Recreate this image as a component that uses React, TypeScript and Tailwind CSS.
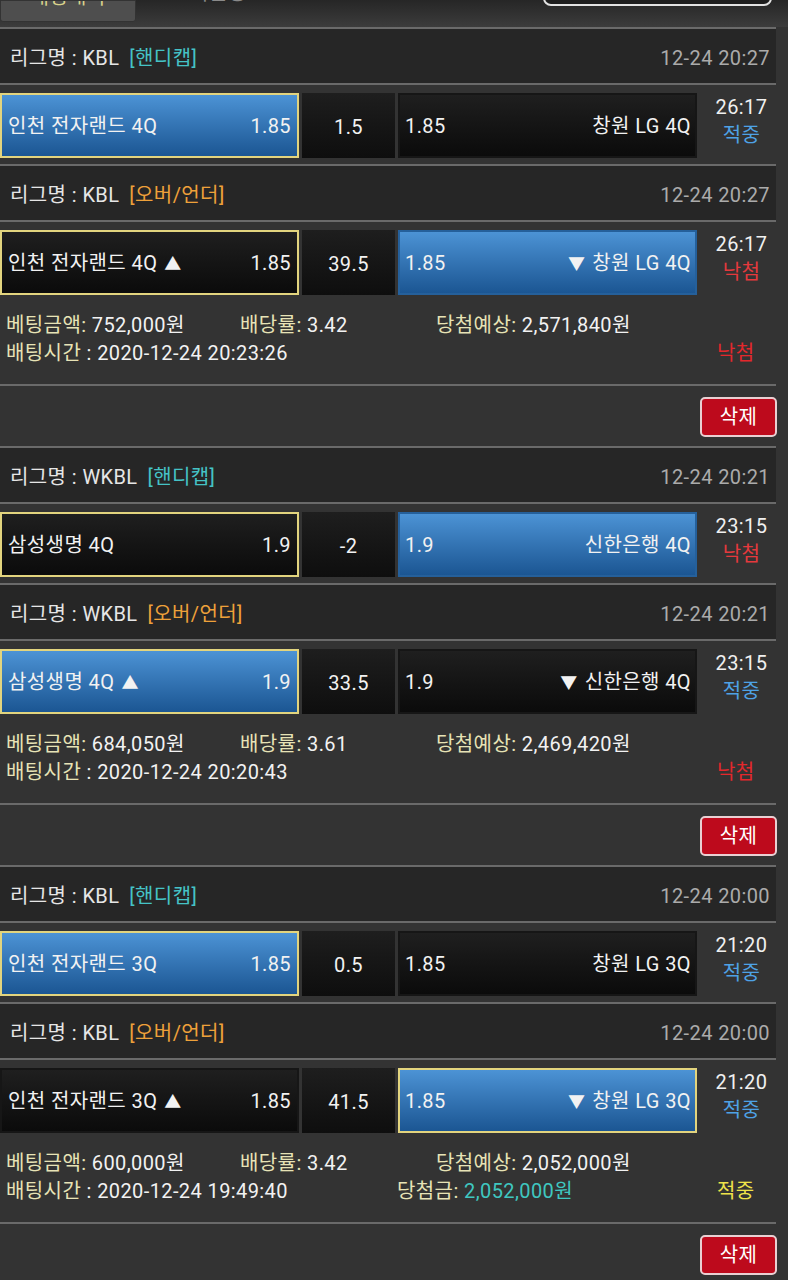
import React from 'react';

type Side = { name: string; odds: string; blue?: boolean; pick?: boolean; arrow?: 'up' | 'down' };

type Match = {
  league: string;
  kind: 'handi' | 'ou';
  date: string;
  home: Side;
  line: string;
  away: Side;
  time: string;
  result: 'hit' | 'miss';
};

type Bet = {
  matches: [Match, Match];
  amount: string;
  rate: string;
  expect: string;
  betTime: string;
  won?: string;
  status: 'hit' | 'miss';
};

const bets: Bet[] = [
  {
    matches: [
      {
        league: 'KBL', kind: 'handi', date: '12-24 20:27',
        home: { name: '인천 전자랜드 4Q', odds: '1.85', blue: true, pick: true },
        line: '1.5',
        away: { name: '창원 LG 4Q', odds: '1.85' },
        time: '26:17', result: 'hit',
      },
      {
        league: 'KBL', kind: 'ou', date: '12-24 20:27',
        home: { name: '인천 전자랜드 4Q', odds: '1.85', pick: true, arrow: 'up' },
        line: '39.5',
        away: { name: '창원 LG 4Q', odds: '1.85', blue: true, arrow: 'down' },
        time: '26:17', result: 'miss',
      },
    ],
    amount: '752,000원', rate: '3.42', expect: '2,571,840원',
    betTime: '2020-12-24 20:23:26', status: 'miss',
  },
  {
    matches: [
      {
        league: 'WKBL', kind: 'handi', date: '12-24 20:21',
        home: { name: '삼성생명 4Q', odds: '1.9', pick: true },
        line: '-2',
        away: { name: '신한은행 4Q', odds: '1.9', blue: true },
        time: '23:15', result: 'miss',
      },
      {
        league: 'WKBL', kind: 'ou', date: '12-24 20:21',
        home: { name: '삼성생명 4Q', odds: '1.9', blue: true, pick: true, arrow: 'up' },
        line: '33.5',
        away: { name: '신한은행 4Q', odds: '1.9', arrow: 'down' },
        time: '23:15', result: 'hit',
      },
    ],
    amount: '684,050원', rate: '3.61', expect: '2,469,420원',
    betTime: '2020-12-24 20:20:43', status: 'miss',
  },
  {
    matches: [
      {
        league: 'KBL', kind: 'handi', date: '12-24 20:00',
        home: { name: '인천 전자랜드 3Q', odds: '1.85', blue: true, pick: true },
        line: '0.5',
        away: { name: '창원 LG 3Q', odds: '1.85' },
        time: '21:20', result: 'hit',
      },
      {
        league: 'KBL', kind: 'ou', date: '12-24 20:00',
        home: { name: '인천 전자랜드 3Q', odds: '1.85', arrow: 'up' },
        line: '41.5',
        away: { name: '창원 LG 3Q', odds: '1.85', blue: true, pick: true, arrow: 'down' },
        time: '21:20', result: 'hit',
      },
    ],
    amount: '600,000원', rate: '3.42', expect: '2,052,000원',
    betTime: '2020-12-24 19:49:40', won: '2,052,000원', status: 'hit',
  },
];

const Line = () => <div className="h-[2px] w-[776px] bg-[#6a6a6a]" />;

const LeagueHeader = ({ m }: { m: Match }) => (
  <div className="flex h-[54px] w-[776px] items-center justify-between bg-[#262626] pl-[10px] pr-[6px] pt-[4px]">
    <div className="flex items-center">
      <span className="text-[#e6e6e6]">리그명 : {m.league}</span>
      {m.kind === 'handi' ? (
        <span className="ml-[10px] text-[#45c3c6]">[핸디캡]</span>
      ) : (
        <span className="ml-[10px] text-[#eea13a]">[오버/언더]</span>
      )}
    </div>
    <span className="text-[#ababab]">{m.date}</span>
  </div>
);

const Cell = ({ s, away }: { s: Side; away?: boolean }) => {
  const bg = s.blue
    ? 'bg-linear-to-b from-[#4c93d5] to-[#1b5693]'
    : 'bg-linear-to-b from-[#1f1f1f] to-[#0b0b0b]';
  const border = s.pick ? 'border-[#e2d47e]' : s.blue ? 'border-[#25609b]' : 'border-[#161616]';
  return (
    <div className={`flex h-[65px] w-[299px] items-center justify-between border-2 pt-[1px] text-[#f2f2f2] ${bg} ${border}`}>
      {away ? (
        <>
          <span className="pl-[5px]">{s.odds}</span>
          <span className="pr-[4px]">
            {s.arrow === 'down' && <span className="mr-[7px] text-[17px]">▼</span>}
            {s.name}
          </span>
        </>
      ) : (
        <>
          <span className="pl-[6px]">
            {s.name}
            {s.arrow === 'up' && <span className="ml-[7px] text-[17px]">▲</span>}
          </span>
          <span className="pr-[6px]">{s.odds}</span>
        </>
      )}
    </div>
  );
};

const MatchRow = ({ m, last }: { m: Match; last?: boolean }) => (
  <div className={`flex items-start pt-[8px] ${last ? '' : 'h-[79px]'}`}>
    <Cell s={m.home} />
    <div className="ml-[3px] flex h-[65px] w-[93px] items-center justify-center bg-linear-to-b from-[#1e1e1e] to-[#0e0e0e] pt-[3px] text-[#f2f2f2]">
      {m.line}
    </div>
    <div className="ml-[3px]">
      <Cell s={m.away} away />
    </div>
    <div className="flex w-[91px] flex-col items-center pr-[2px] leading-[28px]">
      <span className="text-[#f0f0f0]">{m.time}</span>
      <span className={m.result === 'hit' ? 'text-[#4ea2e6]' : 'text-[#e5393d]'}>
        {m.result === 'hit' ? '적중' : '낙첨'}
      </span>
    </div>
  </div>
);

const Info = ({ b }: { b: Bet }) => (
  <div className="h-[89px] pl-[6px] pt-[16px] leading-[28px] text-[#f2f2f2]">
    <div className="flex">
      <div className="w-[234px]">
        <span className="text-[#e7e3b6]">베팅금액:</span> {b.amount}
      </div>
      <div className="w-[196px]">
        <span className="text-[#e7e3b6]">배당률:</span> {b.rate}
      </div>
      <div>
        <span className="text-[#e7e3b6]">당첨예상:</span> {b.expect}
      </div>
    </div>
    <div className="flex">
      <div className="w-[391px]">
        <span className="text-[#e7e3b6]">배팅시간</span> : {b.betTime}
      </div>
      <div className="w-[320px]">
        {b.won && (
          <>
            <span className="text-[#e7e3b6]">당첨금:</span>{' '}
            <span className="text-[#3fc7c0]">{b.won}</span>
          </>
        )}
      </div>
      <span className={b.status === 'hit' ? 'text-[#eee34a]' : 'text-[#e3282c]'}>
        {b.status === 'hit' ? '적중' : '낙첨'}
      </span>
    </div>
  </div>
);

const TopBar = () => (
  <div className="flex h-[27px] items-start overflow-hidden bg-linear-to-b from-[#262626] to-[#3c3c3c]">
    <div className="flex h-[22px] w-[136px] items-end justify-center overflow-hidden rounded-b-[3px] border border-[#333] bg-[#4e4e4e]">
      <span className="mb-[14px] leading-[19px] text-[#d9d38c]">배팅내역</span>
    </div>
    <span className="ml-[54px] -mt-[16px] leading-[19px] text-[#8a8a8a]">회원정보</span>
    <div className="ml-auto mr-[16px] -mt-[24px] h-[30px] w-[229px] rounded-lg border-2 border-[#e2e2e2] bg-[#1e1e1e]" />
  </div>
);

export default function App() {
  return (
    <div
      className="min-h-[1280px] w-[788px] overflow-hidden bg-[#333333] text-[20px] tracking-[0.4px]"
      style={{ fontFamily: "Roboto, 'Noto Sans CJK KR', sans-serif" }}
    >
      <TopBar />
      {bets.map((b, i) => (
        <div key={i}>
          <Line />
          <LeagueHeader m={b.matches[0]} />
          <Line />
          <MatchRow m={b.matches[0]} />
          <Line />
          <LeagueHeader m={b.matches[1]} />
          <Line />
          <MatchRow m={b.matches[1]} last />
          <Info b={b} />
          <Line />
          <div className="flex h-[60px] w-[788px] items-start justify-end pr-[11px] pt-[11px]">
            <button className="flex h-[40px] w-[77px] items-center justify-center rounded-[5px] border-2 border-[#e9cfd2] bg-[#bd0a1c] text-white">
              삭제
            </button>
          </div>
        </div>
      ))}
    </div>
  );
}
